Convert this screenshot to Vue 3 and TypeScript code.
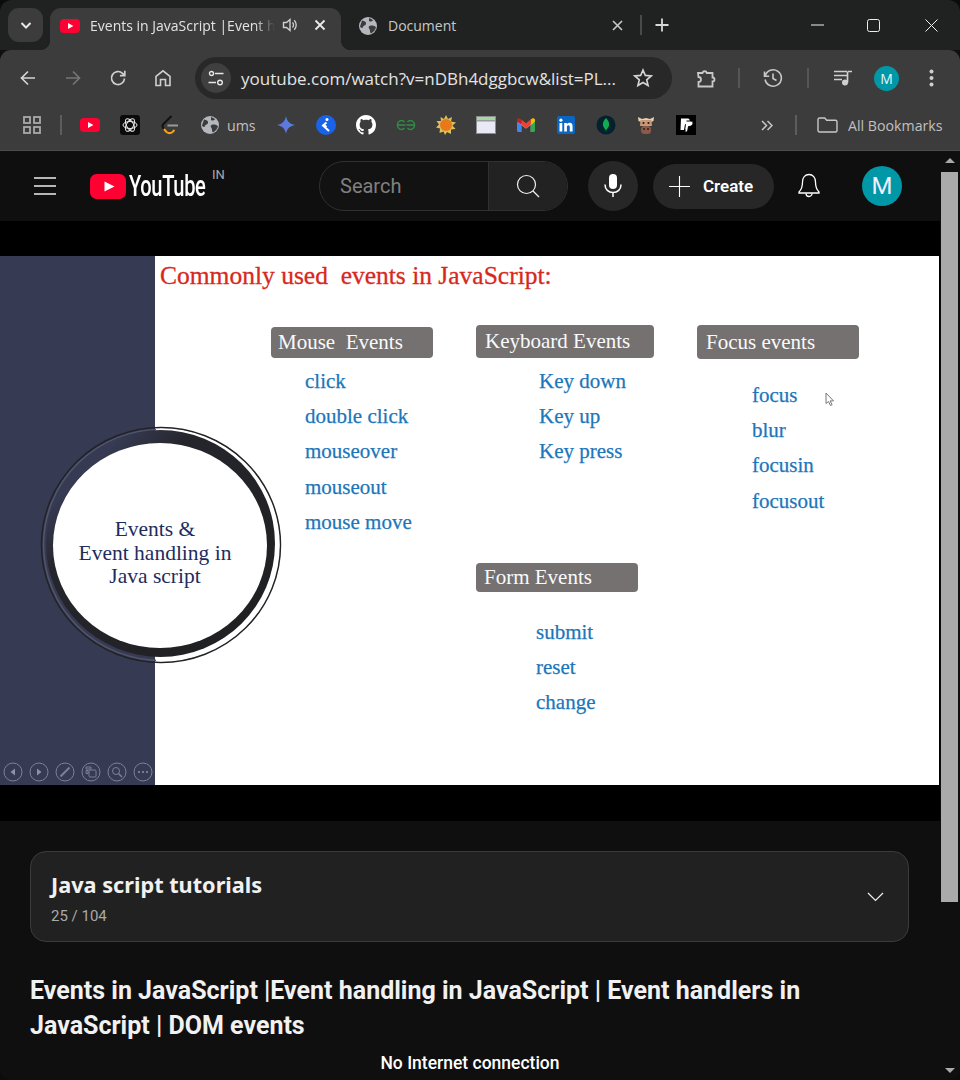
<script setup lang="ts">
interface EventGroup { key: string; label: string; items: string[] }
const slideTitle = 'Commonly used  events in JavaScript:'
const groups: EventGroup[] = [
  { key: 'mouse', label: 'Mouse  Events', items: ['click', 'double click', 'mouseover', 'mouseout', 'mouse move'] },
  { key: 'keyboard', label: 'Keyboard Events', items: ['Key down', 'Key up', 'Key press'] },
  { key: 'focus', label: 'Focus events', items: ['focus', 'blur', 'focusin', 'focusout'] },
  { key: 'form', label: 'Form Events', items: ['submit', 'reset', 'change'] },
]
</script>

<template>
  <div class="window">
    <!-- tab strip -->
    <div class="tabstrip">
      <button class="tabsearch">
        <svg width="14" height="14" viewBox="0 0 14 14"><path d="M2.5 5l4.5 4.5L11.5 5" fill="none" stroke="#e8e8e8" stroke-width="2"/></svg>
      </button>
      <div class="tab active">
        <svg width="20" height="14" viewBox="0 0 20 14"><rect width="20" height="14" rx="4" fill="#ff0033"/><path d="M8 4l5.4 3L8 10z" fill="#fff"/></svg>
        <span class="tabtitle">Events in JavaScript |Event h</span>
        <svg class="speaker" width="16" height="16" viewBox="0 0 16 16"><path d="M1.5 5.5h3L8 2.5v11l-3.500-3h-3z" fill="none" stroke="#d0d0d0" stroke-width="1.400"/><path d="M10.500 5.500a3.500 3.500 0 0 1 0 5M12.200 3.300a6.500 6.500 0 0 1 0 9.400" fill="none" stroke="#d0d0d0" stroke-width="1.300"/></svg>
        <svg class="tabclose" width="12" height="12" viewBox="0 0 12 12"><path d="M1.500 1.500l9 9M10.500 1.500l-9 9" stroke="#ececec" stroke-width="1.800"/></svg>
      </div>
      <div class="tab idle">
        <svg width="18" height="18" viewBox="0 0 18 18"><circle cx="9" cy="9" r="9" fill="#b4b8bc"/><path d="M3 3.500c3 .5 4.500 1.500 4 3.500s-2.500 1-3 3-2.500.5-3-.5zM10.500 9c2.500-1 5 0 6.500 1-.5 3-2.500 5-5 6.500-1.500-1-.5-3-1.500-4.500s-1.500-2-0-3zM10 1c1.500.5 3 1 4 2.500-1 1-2.500 1.500-4 .5z" fill="#3a3c3e"/></svg>
        <span class="tabtitle2">Document</span>
        <svg class="tabclose2" width="11" height="11" viewBox="0 0 11 11"><path d="M1 1l9 9M10 1l-9 9" stroke="#c8c8c8" stroke-width="1.600"/></svg>
      </div>
      <span class="stripdiv"></span>
      <svg class="newtab" width="14" height="14" viewBox="0 0 14 14"><path d="M7 .5v13M.5 7h13" stroke="#d8d8d8" stroke-width="1.800"/></svg>
      <div class="wincontrols">
        <svg width="13" height="2" viewBox="0 0 13 2"><path d="M0 1h13" stroke="#eee" stroke-width="1"/></svg>
        <svg width="13" height="13" viewBox="0 0 13 13"><rect x=".5" y=".5" width="12" height="12" rx="2" fill="none" stroke="#eee"/></svg>
        <svg width="13" height="13" viewBox="0 0 13 13"><path d="M.5.500l12 12M12.500.500l-12 12" stroke="#eee" stroke-width="1"/></svg>
      </div>
    </div>

    <!-- toolbar -->
    <div class="toolbar">
      <div class="navs">
        <svg width="18" height="18" viewBox="0 0 18 18"><path d="M16 9H2.500M9 2.500L2.500 9 9 15.500" fill="none" stroke="#d4d4d4" stroke-width="1.700"/></svg>
        <svg width="18" height="18" viewBox="0 0 18 18"><path d="M2 9h13.500M9 2.500L15.500 9 9 15.500" fill="none" stroke="#757575" stroke-width="1.700"/></svg>
        <svg width="18" height="18" viewBox="0 0 18 18"><path d="M15.500 9.500a6.500 6.500 0 1 1-2-5.200L15.800 6.500M15.800 1.800v4.900h-4.900" fill="none" stroke="#cfcfcf" stroke-width="1.700"/></svg>
        <svg width="18" height="18" viewBox="0 0 18 18"><path d="M2 16.500V7.500L9 1.800l7 5.700v9h-4.500v-6h-5v6z" fill="none" stroke="#cfcfcf" stroke-width="1.600"/></svg>
      </div>
      <div class="omnibox">
        <span class="tune">
          <svg width="16" height="16" viewBox="0 0 16 16"><circle cx="3.500" cy="3.500" r="2" fill="none" stroke="#e6e6e6" stroke-width="1.400"/><path d="M7 3.500h8.500M.5 12.500H8" stroke="#e6e6e6" stroke-width="1.400"/><circle cx="12" cy="12.500" r="2.300" fill="none" stroke="#e6e6e6" stroke-width="1.400"/></svg>
        </span>
        <span class="url">youtube.com/watch?v=nDBh4dggbcw&amp;list=PL...</span>
        <svg class="star" width="20" height="20" viewBox="0 0 20 20"><path d="M10 2l2.300 5.400 5.900.5-4.500 3.900 1.400 5.700-5.100-3-5.100 3 1.400-5.700L1.800 7.900l5.900-.5z" fill="none" stroke="#d6d6d6" stroke-width="1.600"/></svg>
      </div>
      <svg class="tool ext" width="22" height="22" viewBox="0 0 22 22"><path d="M3 6h4.500a2.200 2.200 0 0 1 4.300 0H17.500v4.500a2 2 0 0 1 0 4V19.500H3.500v-4.500a2.500 2.500 0 0 0 0-5z" fill="none" stroke="#c8c8c8" stroke-width="1.800"/></svg>
      <span class="tooldiv d1"></span>
      <svg class="tool hist" width="20" height="20" viewBox="0 0 20 20"><path d="M2.200 8a8.200 8.200 0 1 1-.1 3.500M1.500 3.500v4.700h4.700M10 5.500v5l3.500 2" fill="none" stroke="#c8c8c8" stroke-width="1.600"/></svg>
      <span class="tooldiv d2"></span>
      <svg class="tool media" width="20" height="18" viewBox="0 0 20 18"><path d="M1 2.500h13M1 6.500h13M1 10.500h8" stroke="#cfcfcf" stroke-width="1.700"/><path d="M14.500 3v10.500" stroke="#cfcfcf" stroke-width="1.700"/><path d="M14.500 2.500H19" stroke="#cfcfcf" stroke-width="1.700"/><circle cx="12" cy="13.500" r="3" fill="#cfcfcf"/></svg>
      <span class="chromeavatar">M</span>
      <svg class="tool dots" width="5" height="18" viewBox="0 0 5 18"><circle cx="2.500" cy="2.500" r="2" fill="#d0d0d0"/><circle cx="2.500" cy="9" r="2" fill="#d0d0d0"/><circle cx="2.500" cy="15.500" r="2" fill="#d0d0d0"/></svg>
    </div>

    <!-- bookmarks -->
    <div class="bookmarks">
      <svg class="apps" width="18" height="18" viewBox="0 0 18 18"><g fill="none" stroke="#a9a9a9" stroke-width="1.800"><rect x="1" y="1" width="6" height="6"/><rect x="11" y="1" width="6" height="6"/><rect x="1" y="11" width="6" height="6"/><rect x="11" y="11" width="6" height="6"/></g></svg>
      <span class="bmdiv first"></span>
      <span class="slot"><svg width="20" height="14" viewBox="0 0 20 14"><rect width="20" height="14" rx="4" fill="#ff0033"/><path d="M8 4l5.400 3L8 10z" fill="#fff"/></svg></span>
      <span class="slot"><svg width="20" height="20" viewBox="0 0 20 20"><rect width="20" height="20" rx="3" fill="#0b0b0b"/><g fill="none" stroke="#e8e8e8" stroke-width="1"><ellipse cx="10" cy="10" rx="7" ry="3.500"/><ellipse cx="10" cy="10" rx="7" ry="3.500" transform="rotate(60 10 10)"/><ellipse cx="10" cy="10" rx="7" ry="3.500" transform="rotate(120 10 10)"/></g></svg></span>
      <span class="slot"><svg width="18" height="20" viewBox="0 0 18 20"><path d="M10.500 1L2 9.500c-1.500 2 0 3.500 1 4.500" fill="none" stroke="#111" stroke-width="2"/><path d="M3 14l2.500 3c2 1.500 4 1.500 6 0l2-2" fill="none" stroke="#f5a11c" stroke-width="2"/><path d="M6.500 10.500H17" stroke="#9a9a9a" stroke-width="1.800"/></svg></span>
      <span class="slot"><svg width="18" height="18" viewBox="0 0 18 18"><circle cx="9" cy="9" r="9" fill="#b4b8bc"/><path d="M3 3.500c3 .5 4.500 1.500 4 3.500s-2.500 1-3 3-2.500.5-3-.5zM10.500 9c2.500-1 5 0 6.500 1-.5 3-2.500 5-5 6.500-1.500-1-.5-3-1.500-4.500s-1.500-2-0-3zM10 1c1.500.5 3 1 4 2.500-1 1-2.500 1.500-4 .5z" fill="#3a3c3e"/></svg></span>
      <span class="umslabel">ums</span>
      <span class="slot"><svg width="18" height="18" viewBox="0 0 18 18"><defs><linearGradient id="gem" x1="0" y1="1" x2="1" y2="0"><stop offset="0" stop-color="#7a67c9"/><stop offset="1" stop-color="#3f8df0"/></linearGradient></defs><path d="M9 0c.8 5 3.500 8 9 9-5.500 1-8.200 4-9 9-.8-5-3.500-8-9-9 5.500-1 8.200-4 9-9z" fill="url(#gem)"/></svg></span>
      <span class="slot"><svg width="20" height="20" viewBox="0 0 20 20"><circle cx="10" cy="10" r="10" fill="#1a63e8"/><circle cx="11" cy="4.500" r="1.500" fill="#fff"/><path d="M10.500 7.500L7 10.500l6 5.500M8 10l2.500 2" fill="none" stroke="#fff" stroke-width="2"/></svg></span>
      <span class="slot"><svg width="20" height="20" viewBox="0 0 16 16"><path fill="#fff" d="M8 0C3.580 0 0 3.580 0 8c0 3.540 2.290 6.530 5.470 7.590.4.070.55-.17.55-.38 0-.19-.01-.82-.01-1.490-2.010.37-2.530-.49-2.690-.94-.09-.23-.48-.94-.82-1.130-.28-.15-.68-.52-.01-.53.63-.01 1.080.58 1.230.82.720 1.210 1.870.87 2.330.66.070-.52.280-.87.510-1.070-1.780-.2-3.640-.89-3.640-3.950 0-.87.310-1.590.820-2.150-.08-.2-.36-1.020.08-2.120 0 0 .67-.21 2.200.82.640-.18 1.320-.27 2-.27s1.360.09 2 .27c1.530-1.040 2.200-.82 2.200-.82.440 1.100.160 1.920.080 2.120.510.560.820 1.270.820 2.150 0 3.070-1.870 3.750-3.650 3.950.290.250.540.730.540 1.480 0 1.070-.01 1.930-.01 2.200 0 .21.150.46.550.38A8.010 8.010 0 0 0 16 8c0-4.420-3.580-8-8-8z"/></svg></span>
      <span class="slot"><svg width="20" height="12" viewBox="0 0 20 12"><g fill="none" stroke="#2f8d46" stroke-width="1.400"><path d="M9.500 6H1.500a4 4 0 0 1 7-3M1.500 6a4 4 0 0 0 7 3"/><path d="M10.500 6h8a4 4 0 0 0-7-3M18.500 6a4 4 0 0 1-7 3"/></g></svg></span>
      <span class="slot"><svg width="20" height="20" viewBox="0 0 20 20"><path d="M10 0l2 4 4-2-1 4.500 5 1-3.500 3 3 3.500-4.500.5L15 19l-4-2-2 3-1.500-3.500L3.500 18l.5-4.500L0 12.500l3-3L.5 6 5 6 4.500 2l3.500 2z" fill="#d9c25a"/><circle cx="10" cy="10" r="6" fill="#e8781a"/></svg></span>
      <span class="slot"><svg width="20" height="18" viewBox="0 0 20 18"><rect x=".5" y=".5" width="19" height="17" fill="#e9e9f6" stroke="#8d8d8d"/><rect x="1" y="1" width="18" height="3" fill="#a5d6a7"/><rect x="1" y="4" width="18" height="1.500" fill="#9a9a9a"/></svg></span>
      <span class="slot"><svg width="18" height="14" viewBox="0 0 18 14"><path d="M1.200 14V3L9 8.800 16.800 3V14h-3V6.800L9 10.500 4.200 6.800V14z" fill="#ecf0f4"/><path d="M0 12.500C0 13.300.6 14 1.300 14h3V6.800L0 3.500z" fill="#4285f4"/><path d="M13.700 14h3c.7 0 1.300-.7 1.300-1.500v-9l-4.300 3.300z" fill="#34a853"/><path d="M13.700 1.500V6.800L18 3.500V2c0-1.500-1.600-2.300-2.800-1.400z" fill="#fbbc04"/><path d="M4.300 6.800V1.500L9 5.200l4.700-3.700V6.800L9 10.400z" fill="#ea4335"/><path d="M0 2v1.500l4.300 3.300V1.500L2.800.6C1.600-.3 0 .5 0 2z" fill="#c5221f"/></svg></span>
      <span class="slot"><svg width="18" height="18" viewBox="0 0 18 18"><rect width="18" height="18" rx="2" fill="#0a66c2"/><rect x="2.500" y="7" width="2.800" height="8.500" fill="#fff"/><circle cx="3.900" cy="4.200" r="1.600" fill="#fff"/><path d="M7.200 7h2.700v1.200c.5-.8 1.500-1.400 2.700-1.400 2.400 0 3 1.600 3 3.800v4.900h-2.800v-4.300c0-1.100-.3-1.900-1.300-1.900-1.200 0-1.600.9-1.600 2v4.200H7.200z" fill="#fff"/></svg></span>
      <span class="slot"><svg width="20" height="20" viewBox="0 0 20 20"><circle cx="10" cy="10" r="9.500" fill="#03222d"/><path d="M10 3c2.500 2.500 3.500 5 3 7.500-.4 2-1.800 3.300-2.600 4.200L10 17l-.4-2.300c-.8-.9-2.200-2.200-2.600-4.200C6.500 8 7.500 5.500 10 3z" fill="#13aa52"/></svg></span>
      <span class="slot"><svg width="18" height="20" viewBox="0 0 18 20"><path d="M1 2l4 2 4-1 4 1 4-2-.5 4-2.500 1H4L1.500 6z" fill="#e7d1b0"/><path d="M3.500 5h11l.5 6H3z" fill="#c99878"/><rect x="4" y="11" width="10" height="8" rx="3.500" fill="#8c5a48"/><circle cx="6.500" cy="8" r="1.100" fill="#2a1a12"/><circle cx="11.500" cy="8" r="1.100" fill="#2a1a12"/><circle cx="7" cy="14" r=".9" fill="#2a1a12"/><circle cx="11" cy="14" r=".9" fill="#2a1a12"/></svg></span>
      <span class="slot"><svg width="20" height="20" viewBox="0 0 20 20"><rect width="20" height="20" fill="#000"/><path d="M5 3.500h6.500c2.500 0 2.800 2.500 1.800 4.200C12.500 9 11 9.300 9 9.300L8 15H4.500z" fill="#fff"/><path d="M10.500 6h4.500c2 0 2.500 2 1.500 3.800-.8 1.200-2 1.700-4 1.700l-1 5.500H8.800l.4-2.500" fill="#fff" stroke="#000" stroke-width="1"/></svg></span>
      <svg class="more" width="12" height="11" viewBox="0 0 12 11"><path d="M1 1l4.500 4.500L1 10M6.500 1L11 5.500 6.500 10" fill="none" stroke="#c8c8c8" stroke-width="1.500"/></svg>
      <span class="bmdiv second"></span>
      <svg class="folder" width="21" height="16" viewBox="0 0 21 16"><path d="M1 13.500V2.500C1 1.700 1.700 1 2.500 1h5.200l2 2.300h8.800c.8 0 1.500.7 1.500 1.500v8.700c0 .8-.7 1.500-1.500 1.500h-16C1.700 15 1 14.300 1 13.500z" fill="none" stroke="#c8c8c8" stroke-width="1.400"/></svg>
      <span class="allbm">All Bookmarks</span>
    </div>

    <!-- page -->
    <div class="page">
      <div class="content">
        <header class="masthead">
          <div class="brand">
            <svg class="burger" width="24" height="18" viewBox="0 0 24 18"><path d="M1 1h22M1 9h22M1 17h22" stroke="#eee" stroke-width="1.300"/></svg>
            <svg class="ytmark" width="36" height="25" viewBox="0 0 36 25"><rect width="36" height="25" rx="6.500" fill="#ff0033"/><path d="M14.500 7.500l10 5-10 5z" fill="#fff"/></svg>
            <span class="ytword">YouTube</span>
            <span class="country">IN</span>
          </div>
          <div class="searchbox">
            <span class="searchinput">Search</span>
            <span class="searchbtn">
              <svg width="24" height="24" viewBox="0 0 24 24"><circle cx="10.500" cy="10.500" r="9" fill="none" stroke="#f1f1f1" stroke-width="1.200"/><path d="M17 17l6 6" stroke="#f1f1f1" stroke-width="1.200"/></svg>
            </span>
          </div>
          <span class="mic">
            <svg width="18" height="24" viewBox="0 0 18 24"><rect x="5" y="0" width="8" height="15" rx="4" fill="#fff"/><path d="M1 10.500c0 5 3.500 8 8 8s8-3 8-8M9 18.500V23" fill="none" stroke="#fff" stroke-width="1.500"/></svg>
          </span>
          <span class="create">
            <svg width="21" height="21" viewBox="0 0 21 21"><path d="M10.500 0v21M0 10.500h21" stroke="#fff" stroke-width="1.100"/></svg>
            <span>Create</span>
          </span>
          <svg class="bell" width="22" height="26" viewBox="0 0 22 26"><path d="M11 1.500c-4 0-6.500 3-6.500 7.500 0 5-1.500 8-3.500 10v1h20v-1c-2-2-3.500-5-3.500-10 0-4.500-2.500-7.500-6.500-7.500z" fill="none" stroke="#fff" stroke-width="1.300"/><path d="M8 20.500a3 3 0 0 0 6 0" fill="none" stroke="#fff" stroke-width="1.300"/></svg>
          <span class="ytavatar">M</span>
        </header>

        <div class="player">
          <div class="slide">
            <div class="rail">
              <div class="slidectl">
                <svg viewBox="0 0 20 20"><circle cx="10" cy="10" r="9" /><path class="f" d="M12 6.500v7L7.500 10z"/></svg>
                <svg viewBox="0 0 20 20"><circle cx="10" cy="10" r="9" /><path class="f" d="M8 6.500v7l4.500-3.500z"/></svg>
                <svg viewBox="0 0 20 20"><circle cx="10" cy="10" r="9" /><path d="M5.500 14.500L14.500 5.500" stroke-width="2"/></svg>
                <svg viewBox="0 0 20 20"><circle cx="10" cy="10" r="9" /><rect x="8" y="8" width="7" height="7" rx="1"/><path d="M5 5h5v2H5zM5 8.500h2v3H5z"/></svg>
                <svg viewBox="0 0 20 20"><circle cx="10" cy="10" r="9" /><circle cx="9" cy="9" r="3.500"/><path d="M11.500 11.500l3.500 3.500" stroke-width="1.500"/></svg>
                <svg viewBox="0 0 20 20"><circle cx="10" cy="10" r="9" /><circle class="f" cx="6" cy="10" r="1"/><circle class="f" cx="10" cy="10" r="1"/><circle class="f" cx="14" cy="10" r="1"/></svg>
              </div>
            </div>
            <div class="slidemain">
              <h2 class="slidetitle">{{ slideTitle }}</h2>
            </div>
            <svg class="ring" width="260" height="260" viewBox="30 415 260 260">
              <defs>
                <linearGradient id="ringfill" x1="0" y1="0" x2="1" y2="1">
                  <stop offset="0.18" stop-color="#363a52"/>
                  <stop offset="0.32" stop-color="#25262c"/>
                  <stop offset="1" stop-color="#1f1f21"/>
                </linearGradient>
                <linearGradient id="ringline" x1="0" y1="0" x2="1" y2="0">
                  <stop offset="0.48" stop-color="#50546c"/>
                  <stop offset="0.48" stop-color="#ffffff"/>
                </linearGradient>
              </defs>
              <ellipse cx="161" cy="545" rx="119.500" ry="117.500" fill="none" stroke="#232326" stroke-width="1.500"/>
              <ellipse cx="161" cy="545" rx="117.500" ry="115.500" fill="none" stroke="url(#ringline)" stroke-width="1.500"/>
              <ellipse cx="160.500" cy="543.500" rx="114.500" ry="113.500" fill="url(#ringfill)"/>
              <ellipse cx="160" cy="545.500" rx="107" ry="102.500" fill="#fff"/>
            </svg>
            <div class="ringtext">Events &amp;<br />Event handling in<br />Java script</div>
            <section v-for="g in groups" :key="g.key" class="group" :class="g.key">
              <div class="grouplabel">{{ g.label }}</div>
              <ul class="grouplist">
                <li v-for="it in g.items" :key="it">{{ it }}</li>
              </ul>
            </section>
            <svg class="cursor" width="10" height="15" viewBox="0 0 10 15"><path d="M1 1v10.500l2.500-2 2 4 1.600-.8-2-3.800H8.500z" fill="#fff" stroke="#777" stroke-width="1"/></svg>
          </div>
        </div>

        <div class="below">
          <div class="playlist">
            <div class="plhead">
              <div class="pltitle">Java script tutorials</div>
              <div class="plcount">25 / 104</div>
            </div>
            <svg width="17" height="10" viewBox="0 0 17 10"><path d="M1 1l7.500 7.500L16 1" fill="none" stroke="#f1f1f1" stroke-width="1.200"/></svg>
          </div>
          <h1 class="videotitle">Events in JavaScript |Event handling in JavaScript | Event handlers in JavaScript | DOM events</h1>
        </div>
        <div class="offline">No Internet connection</div>
      </div>
      <div class="scrollbar">
        <span class="arrow up"></span>
        <span class="thumb"></span>
        <span class="arrow down"></span>
      </div>
    </div>
  </div>
</template>

<style>
html, body { margin: 0; background: #0c0c0c; }
</style>

<style scoped>
.window {
  width: 960px; height: 1080px; overflow: hidden; display: flex; flex-direction: column;
  border-radius: 12px 12px 10px 10px; background: #0f0f0f;
  font-family: "Open Sans", "Noto Sans", sans-serif;
}
button { border: 0; padding: 0; }

.tabstrip { height: 50px; flex: none; background: #202221; display: flex; align-items: flex-end; position: relative; }
.tabsearch { width: 35px; height: 34px; margin: 0 7px 8px 8px; background: #3c3c3c; border-radius: 11px; display: flex; align-items: center; justify-content: center; }
.tab { height: 42px; display: flex; align-items: center; position: relative; box-sizing: border-box; padding-bottom: 7px; }
.tab.active { width: 291px; background: #3c3c3c; border-radius: 11px 11px 0 0; padding-left: 10px; }
.tab.active::before, .tab.active::after { content: ""; position: absolute; bottom: 0; width: 10px; height: 10px; }
.tab.active::before { left: -10px; background: radial-gradient(circle at 0 0, transparent 10px, #3c3c3c 10.500px); }
.tab.active::after { right: -10px; background: radial-gradient(circle at 100% 0, transparent 10px, #3c3c3c 10.500px); }
.tabtitle {
  width: 185px; margin-left: 10px; white-space: nowrap; font-size: 14px; color: #e3e3e3;
  -webkit-mask-image: linear-gradient(90deg, #000 165px, transparent 185px);
  mask-image: linear-gradient(90deg, #000 165px, transparent 185px);
}
.speaker { position: absolute; left: 232px; top: 9px; }
.tabclose { position: absolute; left: 264px; top: 11px; }
.tab.idle { width: 299px; padding-left: 18px; }
.tabtitle2 { margin-left: 11px; font-size: 14px; color: #c8c8c8; }
.tabclose2 { position: absolute; left: 271px; top: 12px; }
.stripdiv { width: 2px; height: 20px; background: #4a4a4a; margin: 0 0 15px 0; }
.newtab { margin: 0 0 18px 13px; }
.wincontrols { margin-left: auto; display: flex; align-items: center; gap: 45px; padding-right: 22px; height: 50px; }
.wincontrols svg:first-child { margin-right: -2px; }

.toolbar { height: 56px; flex: none; background: #3c3c3c; border-radius: 11px 11px 0 0; display: flex; align-items: center; position: relative; }
.navs { display: flex; gap: 27px; padding-left: 19px; width: 195px; flex: none; box-sizing: border-box; }
.omnibox { width: 477px; height: 42px; flex: none; background: #282828; border-radius: 21px; display: flex; align-items: center; position: relative; }
.tune { width: 30px; height: 30px; margin-left: 6px; border-radius: 50%; background: #3f3f3f; display: flex; align-items: center; justify-content: center; }
.url { margin-left: 10px; font-size: 17px; color: #e3e3e3; white-space: nowrap; }
.star { position: absolute; right: 19px; top: 11px; }
.tool { flex: none; }
.ext { margin-left: 23px; }
.tooldiv { width: 2px; height: 20px; background: #565656; flex: none; }
.d1 { margin-left: 21px; }
.hist { margin-left: 23px; }
.d2 { margin-left: 24px; }
.media { margin-left: 24px; }
.chromeavatar { width: 25px; height: 25px; margin-left: 21px; border-radius: 50%; background: #0097a7; color: #e8f6f7; font-size: 14px; display: flex; align-items: center; justify-content: center; flex: none; }
.dots { margin-left: 30px; }

.bookmarks { height: 38px; padding-bottom: 6px; flex: none; background: #3c3c3c; display: flex; align-items: center; position: relative; padding-left: 23px; border-bottom: 1px solid #4d4d4d; box-sizing: content-box; }
.apps { flex: none; }
.bmdiv { width: 2px; height: 20px; background: #5d5d5d; flex: none; }
.bmdiv.first { margin: 0 8px 0 19px; }
.slot { width: 40px; height: 24px; display: flex; align-items: center; justify-content: center; flex: none; }
.umslabel { font-size: 14.200px; color: #c0c0c0; margin: 0 10px 0 -3px; width: 29px; flex: none; }
.more { margin-left: 55px; flex: none; }
.bmdiv.second { margin: 0 0 0 22px; }
.folder { margin-left: 20px; flex: none; }
.allbm { margin-left: 10px; font-size: 14.200px; color: #c0c0c0; white-space: nowrap; }

.page { flex: 1; min-height: 0; display: flex; position: relative; background: #0f0f0f; }
.content { width: 940px; flex: none; position: relative; font-family: Roboto, "Liberation Sans", sans-serif; color: #f1f1f1; }

.masthead { height: 70px; display: flex; align-items: center; background: #0f0f0f; }
.brand { width: 319px; flex: none; display: flex; align-items: center; position: relative; padding-left: 33px; box-sizing: border-box; }
.ytmark { margin-left: 33px; flex: none; }
.ytword { display: inline-block; width: 78px; margin-left: 3px; font-size: 30px; line-height: 30px; font-weight: 500; color: #fff; letter-spacing: -0.5px; transform: scaleX(.67); transform-origin: 0 50%; white-space: nowrap; }
.country { position: absolute; left: 212px; top: -4px; font-size: 13px; line-height: 15px; color: #aaa; }
.searchbox { width: 249px; height: 50px; box-sizing: border-box; flex: none; border: 1px solid #303030; border-radius: 25px; display: flex; overflow: hidden; background: #121212; }
.searchinput { flex: 1; padding-left: 20px; line-height: 48px; font-size: 20px; color: #808080; }
.searchbtn { width: 79px; flex: none; box-sizing: border-box; background: #222; border-left: 1px solid #303030; display: flex; align-items: center; justify-content: center; }
.mic { width: 50px; height: 50px; margin-left: 20px; border-radius: 50%; background: #272727; display: flex; align-items: center; justify-content: center; flex: none; }
.create { width: 121px; height: 45px; box-sizing: border-box; margin-left: 15px; padding-left: 16px; border-radius: 23px; background: #272727; display: flex; align-items: center; gap: 13px; font-size: 17px; font-weight: 600; color: #fff; flex: none; }
.bell { margin-left: 24px; flex: none; }
.ytavatar { width: 40px; height: 40px; margin-left: 42px; border-radius: 50%; background: #0097a7; color: #eef; font-size: 24px; display: flex; align-items: center; justify-content: center; flex: none; }

.player { height: 600px; background: #000; padding: 35px 1px 36px 0; box-sizing: border-box; }
.slide { height: 529px; background: #fff; display: flex; position: relative; overflow: hidden; font-family: "Liberation Serif", "DejaVu Serif", serif; }
.rail { width: 155px; flex: none; background: #363a52; position: relative; display: flex; align-items: flex-end; }
.slidectl { display: flex; gap: 6px; padding: 0 0 3px 3px; }
.slidectl svg { width: 20px; height: 20px; fill: none; stroke: #7d8097; stroke-width: 1; }
.slidectl .f { fill: #8e90a4; stroke: none; }
.slidemain { flex: 1; padding: 4px 0 0 5px; }
.slidetitle { margin: 0; font-size: 25.500px; line-height: 32px; font-weight: 400; color: #d7281e; white-space: pre; -webkit-text-stroke: .3px #d7281e; }
.ring { position: absolute; left: 30px; top: 159px; }
.ringtext { position: absolute; left: 55px; width: 200px; top: 262px; text-align: center; font-size: 21.500px; line-height: 23.500px; color: #1e2c5e; }
.group { position: absolute; }
.grouplabel { background: #757171; border-radius: 4px; color: #fafafa; font-size: 21px; display: flex; align-items: center; white-space: pre; }
.grouplist { list-style: none; margin: 0; padding: 0; color: #1c76ba; font-size: 21px; line-height: 35.200px; -webkit-text-stroke: .25px #1c76ba; }
.group.mouse { left: 271px; top: 71px; width: 162px; }
.group.mouse .grouplabel { height: 31px; padding-left: 7px; }
.group.mouse .grouplist { margin: 6px 0 0 34px; }
.group.keyboard { left: 476px; top: 69px; width: 178px; }
.group.keyboard .grouplabel { height: 33px; padding-left: 9px; }
.group.keyboard .grouplist { margin: 6px 0 0 63px; }
.group.focus { left: 697px; top: 69px; width: 162px; }
.group.focus .grouplabel { height: 34px; padding-left: 9px; }
.group.focus .grouplist { margin: 19px 0 0 55px; }
.group.form { left: 476px; top: 307px; width: 162px; }
.group.form .grouplabel { height: 29px; padding-left: 8px; }
.group.form .grouplist { margin: 23px 0 0 60px; }
.cursor { position: absolute; left: 825px; top: 136px; }

.below { padding: 30px 31px 0 30px; }
.playlist { height: 91px; box-sizing: border-box; background: #212121; border: 1px solid #3b3b3b; border-radius: 16px; padding: 0 24px 0 20px; display: flex; align-items: center; justify-content: space-between; }
.plhead { padding-top: 4px; }
.pltitle { font-family: "Noto Sans", "Open Sans", sans-serif; font-size: 21.700px; font-weight: 700; line-height: 28px; color: #f1f1f1; }
.plcount { font-size: 15px; line-height: 20px; margin-top: 7px; color: #aaa; }
.videotitle { margin: 31px 0 0; font-size: 25px; line-height: 35px; font-weight: 700; color: #f1f1f1; }
.offline { position: absolute; left: 0; width: 940px; top: 901px; text-align: center; font-size: 17.500px; font-weight: 500; color: #fff; line-height: 22px; }

.scrollbar { width: 20px; flex: none; display: flex; flex-direction: column; align-items: flex-start; background: #0f0f0f; position: relative; }
.arrow { position: absolute; left: 5px; width: 0; height: 0; border-left: 5px solid transparent; border-right: 5px solid transparent; }
.arrow.up { top: 7px; border-bottom: 5px solid #aaa; }
.arrow.down { bottom: 7px; border-top: 5px solid #aaa; }
.thumb { width: 17px; height: 730px; margin: 21px 0 0 1px; background: #aaa; }
</style>
